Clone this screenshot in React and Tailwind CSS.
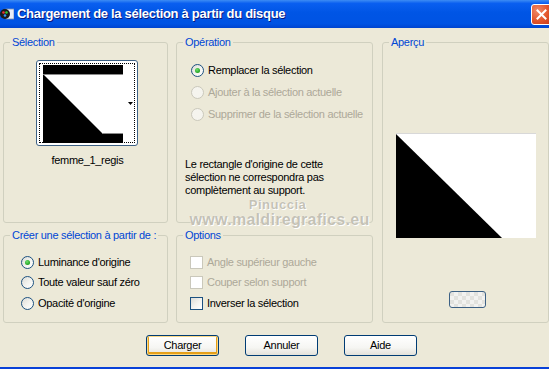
import React from 'react';

const font = { fontFamily: '"Liberation Sans", Arial, sans-serif' };

const Radio = ({ checked, disabled }) => (
  <span
    className={`relative w-[13px] h-[13px] rounded-full border shrink-0 flex items-center justify-center ${
      disabled
        ? 'border-[#cac8bb] bg-[#f5f4ee]'
        : 'border-[#1c5180] bg-[linear-gradient(135deg,#dcdcd7_0%,#f4f4f0_55%,#ffffff_100%)]'
    }`}
  >
    {checked && (
      <span className="w-[5px] h-[5px] rounded-full bg-[radial-gradient(circle_at_40%_35%,#6ee06e_0%,#21a121_70%,#1a8a1a_100%)]" />
    )}
  </span>
);

const Check = ({ disabled }) => (
  <span
    className={`w-[13px] h-[13px] border shrink-0 ${
      disabled
        ? 'border-[#cac8bb] bg-white'
        : 'border-[#1c5180] bg-[linear-gradient(135deg,#dcdcd7_0%,#f4f4f0_55%,#ffffff_100%)]'
    }`}
  />
);

// padding goes on the inner div: fieldset padding would also shift the legend
const Group = ({ title, className, inner, children }) => (
  <fieldset className={`border border-[#d0d0bf] rounded-[3px] ${className}`}>
    <legend className="ml-[6px] px-[2px] text-[11px] leading-[13px] text-[#0046d5] whitespace-nowrap">{title}</legend>
    <div className={inner}>{children}</div>
  </fieldset>
);

const Button = ({ label, def }) => (
  <button
    className={`w-[73px] h-[21px] rounded-[3px] border border-[#003c74] text-[11px] text-black bg-[linear-gradient(180deg,#ffffff_0%,#f6f6f3_60%,#e3e2da_100%)] ${
      def ? 'shadow-[inset_0_0_0_1px_#fbd886,inset_0_-1px_0_2px_#e5a01a]' : ''
    }`}
  >
    {label}
  </button>
);

const Row = ({ h, muted, children }) => (
  <div className={`${h} flex items-center gap-[4px] text-[11px] whitespace-nowrap ${muted ? 'text-[#aca899]' : ''}`}>
    {children}
  </div>
);

export default function App() {
  return (
    <div
      className="w-[549px] h-[369px] overflow-hidden bg-[#ece9d8] flex flex-col text-black tracking-[-0.3px]"
      style={font}
    >
      {/* title bar */}
      <div className="h-[28px] shrink-0 flex items-center tracking-normal bg-[linear-gradient(180deg,#3d8cf4_0%,#0a5ff0_12%,#0055e5_45%,#0053e3_85%,#0044cf_100%)]">
        <svg width="14" height="14" viewBox="0 0 14 14" className="mr-[3px]">
          <rect x="6" y="2" width="8" height="10" fill="#e8eef8" stroke="#7a8fb0" strokeWidth="0.8" />
          <circle cx="5" cy="7" r="5" fill="#1a1a1a" />
          <circle cx="3.5" cy="5.5" r="1.3" fill="#e33" />
          <circle cx="6.5" cy="5.5" r="1.3" fill="#3c3" />
          <circle cx="5" cy="8.5" r="1.3" fill="#39f" />
        </svg>
        <span className="text-white font-bold text-[13px] tracking-[-0.3px] [text-shadow:1px_1px_0_#0a1a80]">
          Chargement de la sélection à partir du disque
        </span>
        <div className="ml-auto mr-[-3px] w-[21px] h-[21px] rounded-[3px] border border-white bg-[radial-gradient(circle_at_30%_30%,#f08a6a_0%,#e2552b_55%,#c4381a_100%)] flex items-center justify-center">
          <svg width="11" height="11" viewBox="0 0 11 11">
            <path d="M1.5 1.5 L9.5 9.5 M9.5 1.5 L1.5 9.5" stroke="white" strokeWidth="2" strokeLinecap="square" />
          </svg>
        </div>
      </div>

      {/* body */}
      <div className="flex gap-[8px] pl-[3px] pt-[8px]">
        {/* left column */}
        <div className="w-[165px] flex flex-col gap-[6px]">
          <Group title="Sélection" className="h-[187px]" inner="flex flex-col items-center">
            <div className="mt-[11px] ml-[3px] w-[102px] h-[86px] rounded-[3px] border border-[#3d6185] bg-white p-[2px]">
              <div className="relative w-full h-full border border-dotted border-black flex items-start pt-[1px] pl-[3px]">
                <svg width="80" height="78" viewBox="0 0 80 78">
                  <rect width="80" height="78" fill="#000" />
                  <polygon points="0,9 80,9 80,68 59,68" fill="#fff" />
                  <line x1="0" y1="9.5" x2="80" y2="9.5" stroke="#8a8a8a" strokeWidth="1" />
                  <line x1="59" y1="68.5" x2="80" y2="68.5" stroke="#8a8a8a" strokeWidth="1" />
                </svg>
                <svg width="5" height="3" viewBox="0 0 5 3" className="absolute right-[1px] top-[38px]">
                  <polygon points="0,0 5,0 2.5,3" fill="#000" />
                </svg>
              </div>
            </div>
            <div className="mt-[8px] ml-[4px] text-[11px] leading-[13px]">femme_1_regis</div>
          </Group>
          <Group title="Créer une sélection à partir de :" className="h-[94px]" inner="pl-[17px] pt-[10px]">
            <Row h="h-[20px]">
              <Radio checked />
              <span>Luminance d'origine</span>
            </Row>
            <Row h="h-[21px]">
              <Radio />
              <span>Toute valeur sauf zéro</span>
            </Row>
            <Row h="h-[20px]">
              <Radio />
              <span>Opacité d'origine</span>
            </Row>
          </Group>
        </div>

        {/* middle column */}
        <div className="relative w-[197px] flex flex-col gap-[6px]">
          <Group title="Opération" className="h-[187px]" inner="pl-[14px] pt-[10px]">
            <Row h="h-[22px]">
              <Radio checked />
              <span>Remplacer la sélection</span>
            </Row>
            <Row h="h-[22px]" muted>
              <Radio disabled />
              <span>Ajouter à la sélection actuelle</span>
            </Row>
            <Row h="h-[22px]" muted>
              <Radio disabled />
              <span>Supprimer de la sélection actuelle</span>
            </Row>
            <p className="mt-[33px] ml-[-6px] text-[11px] leading-[13px] w-[170px]">
              Le rectangle d'origine de cette sélection ne correspondra pas complètement au support.
            </p>
          </Group>
          <Group title="Options" className="h-[94px]" inner="pl-[13px] pt-[10px]">
            <Row h="h-[20px]" muted>
              <Check disabled />
              <span>Angle supérieur gauche</span>
            </Row>
            <Row h="h-[21px]" muted>
              <Check disabled />
              <span>Couper selon support</span>
            </Row>
            <Row h="h-[20px]">
              <Check />
              <span>Inverser la sélection</span>
            </Row>
          </Group>
          {/* watermark */}
          <div className="absolute left-0 top-[163px] w-[197px] flex flex-col items-center gap-[1px] font-bold tracking-normal text-[#c4c2b6] [text-shadow:0_0_1px_#ffffff,1px_1px_0_#ffffff] pointer-events-none">
            <span className="text-[13px] leading-[12px] ml-[6px] tracking-[0.5px]">Pinuccia</span>
            <span className="text-[16px] leading-[16px] ml-[10px] tracking-[0.3px]">www.maldiregrafics.eu</span>
          </div>
        </div>

        {/* right column */}
        <Group title="Aperçu" className="w-[167px] h-[287px] ml-[1px]" inner="flex flex-col">
          <div className="mt-[84px] ml-[13px] w-[140px] h-[105px] border-t border-[#d8d8d8]">
            <svg width="140" height="104" viewBox="0 0 140 104">
              <rect width="140" height="104" fill="#fff" />
              <polygon points="0,0 0,104 106,104" fill="#000" />
            </svg>
          </div>
          <div className="mt-[53px] ml-[66px] w-[37px] h-[17px] rounded-[3px] border border-[#3d6185] bg-[repeating-conic-gradient(#f2f2f0_0%_25%,#e2e2de_0%_50%)] bg-[length:8px_8px]" />
        </Group>
      </div>

      {/* buttons */}
      <div className="flex gap-[26px] mt-[12px] ml-[146px]">
        <Button label="Charger" def />
        <Button label="Annuler" />
        <Button label="Aide" />
      </div>

      <div className="mt-auto h-[2px] bg-[#0841d8]" />
    </div>
  );
}
